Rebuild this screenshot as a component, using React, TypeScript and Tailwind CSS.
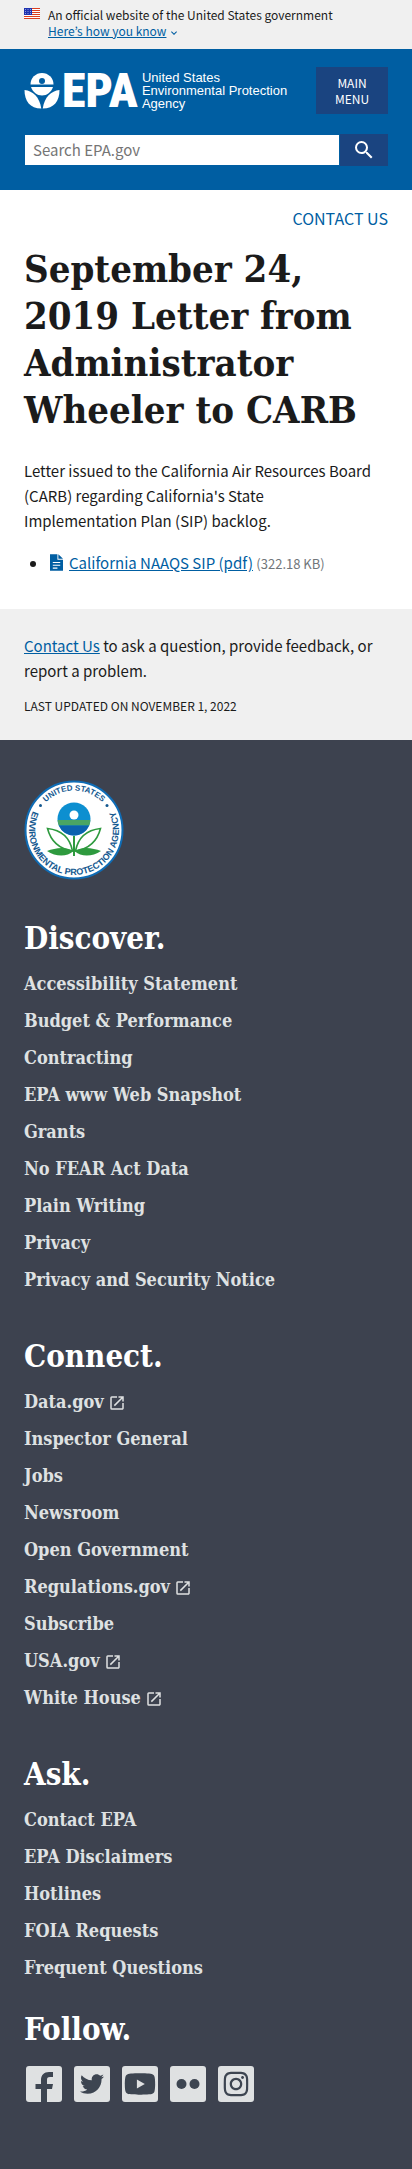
import React from "react";
import { MdOpenInNew, MdSearch, MdExpandMore } from "react-icons/md";
import { FaTwitter, FaYoutube, FaInstagram } from "react-icons/fa";

const serif = "font-['DejaVu_Serif_Condensed','DejaVu_Serif',serif]";

type FooterLink = { label: string; external?: boolean };

const sections: { title: string; links: FooterLink[] }[] = [
  {
    title: "Discover.",
    links: [
      { label: "Accessibility Statement" },
      { label: "Budget & Performance" },
      { label: "Contracting" },
      { label: "EPA www Web Snapshot" },
      { label: "Grants" },
      { label: "No FEAR Act Data" },
      { label: "Plain Writing" },
      { label: "Privacy" },
      { label: "Privacy and Security Notice" },
    ],
  },
  {
    title: "Connect.",
    links: [
      { label: "Data.gov", external: true },
      { label: "Inspector General" },
      { label: "Jobs" },
      { label: "Newsroom" },
      { label: "Open Government" },
      { label: "Regulations.gov", external: true },
      { label: "Subscribe" },
      { label: "USA.gov", external: true },
      { label: "White House", external: true },
    ],
  },
  {
    title: "Ask.",
    links: [
      { label: "Contact EPA" },
      { label: "EPA Disclaimers" },
      { label: "Hotlines" },
      { label: "FOIA Requests" },
      { label: "Frequent Questions" },
    ],
  },
];

function Flag() {
  return (
    <svg viewBox="0 0 16 11" className="mt-2 h-[11px] w-4 shrink-0" aria-hidden="true">
      <rect width="16" height="11" fill="#fff" />
      {[0, 2, 4, 6, 8, 10].map((y) => (
        <rect key={y} y={y} width="16" height="1" fill="#db3e1f" />
      ))}
      <rect width="8" height="7" fill="#1e33b1" />
      {[1.5, 3.5, 5.5].map((y) =>
        [1.5, 4, 6.5].map((x) => <circle key={`${x}-${y}`} cx={x} cy={y} r="0.45" fill="#fff" />),
      )}
    </svg>
  );
}

function Flower() {
  return (
    <svg viewBox="0 0 36 36" className="h-9 w-9 shrink-0" fill="#fff" aria-hidden="true">
      <path d="M6.500 11.500A11.500 11.500 0 0 1 29.500 11.500Z" />
      <circle cx="18" cy="8" r="3" fill="#005ea2" />
      <path d="M7 14H29C27 19.500 23 22.500 18 22.500C13 22.500 9 19.500 7 14Z" />
      <path d="M0.500 17C9 18 15.500 24 17.300 35.500C6 35.500 0.500 28 0.500 17Z" />
      <path d="M35.500 17C27 18 20.500 24 18.700 35.500C30 35.500 35.500 28 35.500 17Z" />
    </svg>
  );
}

function Seal() {
  return (
    <svg viewBox="0 0 100 100" className="h-[100px] w-[100px]" role="img" aria-label="EPA seal">
      <defs>
        <path id="seal-top" d="M10.500 50A39.500 39.500 0 0 1 89.500 50" />
        <path id="seal-bottom" d="M18.180 18.180A45 45 0 1 0 81.820 18.180" />
      </defs>
      <circle cx="50" cy="50" r="48.500" fill="#fff" stroke="#0f6cb5" strokeWidth="2" />
      <g fill="#14588f" className="font-['Liberation_Sans',sans-serif] font-bold">
        <text textAnchor="middle" className="text-[8px]">
          <textPath href="#seal-top" startOffset="50%">UNITED STATES</textPath>
        </text>
        <text textAnchor="middle" className="text-[9px]">
          <textPath href="#seal-bottom" startOffset="50%">ENVIRONMENTAL PROTECTION AGENCY</textPath>
        </text>
      </g>
      <circle cx="16.500" cy="25.500" r="1.500" fill="#14588f" />
      <circle cx="83" cy="25.500" r="1.500" fill="#14588f" />
      <circle cx="50" cy="39" r="16.500" fill="#0d8fd0" />
      <path d="M33.600 40H66.400A16.500 16.500 0 0 1 65.200 45.500H34.800A16.500 16.500 0 0 1 33.600 40Z" fill="#4aa564" />
      <path d="M34.800 45.500H65.200A16.500 16.500 0 0 1 34.800 45.500Z" fill="#0b62ae" />
      <circle cx="50" cy="35" r="4.500" fill="#fff" />
      <path d="M50 56V76" stroke="#2e9a3e" strokeWidth="2" />
      <path d="M48.500 71C36 69 27 62 23.500 48.500C37 50 46 58 48.500 71Z" fill="#fff" stroke="#2e9a3e" strokeWidth="1.600" />
      <path d="M51.500 71C64 69 73 62 76.500 48.500C63 50 54 58 51.500 71Z" fill="#fff" stroke="#2e9a3e" strokeWidth="1.600" />
      <path d="M49.500 71C41 66 31 68 23 71C32 77 43 77 49.500 71Z" fill="#2e9a3e" />
      <path d="M50.500 71C59 66 69 68 77 71C68 77 57 77 50.500 71Z" fill="#2e9a3e" />
    </svg>
  );
}

function SocialLink({ label, children }: { label: string; children: React.ReactNode }) {
  return (
    <a
      href="#"
      aria-label={label}
      className="flex h-9 w-9 items-center justify-center overflow-hidden rounded-[3px] bg-[#dfe1e2] text-[#3d4551]"
    >
      {children}
    </a>
  );
}

export default function App() {
  return (
    <div className="min-h-screen bg-[#3d424f] font-['Noto_Sans_CJK_KR','Noto_Sans',sans-serif] text-[#1b1b1b]">
      <section className="flex h-[49px] gap-2 bg-[#f0f0f0] px-6" aria-label="Official website">
        <Flag />
        <div className="pt-[7px] text-[12px] leading-4">
          <p>An official website of the United States government</p>
          <button className="flex items-center text-[#005ea2]">
            <span className="underline">Here’s how you know</span>
            <MdExpandMore className="mt-1 ml-0.5 h-3 w-3" />
          </button>
        </div>
      </section>

      <header className="bg-[#005ea2] px-6 pt-[18px] pb-6 text-white">
        <div className="flex items-center justify-between">
          <a href="#" className="flex items-center font-['Liberation_Sans',sans-serif]">
            <Flower />
            <span className="ml-0.5 font-['Roboto_Condensed','Roboto',sans-serif] text-[48px] leading-9 font-black">
              EPA
            </span>
            <span className="ml-1 text-[13px] leading-[13px]">
              United States
              <br />
              Environmental Protection
              <br />
              Agency
            </span>
          </a>
          <button className="h-[47px] w-[72px] shrink-0 bg-[#1a4480] px-3 text-[12px] leading-4">MAIN MENU</button>
        </div>
        <form className="mt-5 flex h-8" onSubmit={(e) => e.preventDefault()}>
          <input
            type="search"
            aria-label="Search"
            placeholder="Search EPA.gov"
            className="min-w-0 flex-1 border border-[#005ea2] bg-white px-2 text-[15px] text-[#1b1b1b] placeholder:text-[#757575]"
          />
          <button aria-label="Submit search" className="flex w-12 items-center justify-center bg-[#1a4480]">
            <MdSearch className="h-6 w-6" />
          </button>
        </form>
      </header>

      <main className="bg-white px-6 pt-4 pb-[33px]">
        <div className="text-right text-[16px] leading-6">
          <a href="#" className="text-[#005ea2]">CONTACT US</a>
        </div>
        <h1 className={`${serif} mt-[15px] text-[38px] leading-[47px] font-bold`}>
          September 24, 2019 Letter from Administrator Wheeler to CARB
        </h1>
        <p className="mt-[25px] pr-3 text-[15px] leading-[25px]">
          Letter issued to the California Air Resources Board (CARB) regarding California's State Implementation Plan
          (SIP) backlog.
        </p>
        <ul className="mt-[17px] list-disc pl-6 text-[15px] leading-[25px]">
          <li>
            <a href="#" className="text-[#005ea2] underline">
              <svg viewBox="0 0 14 18" className="mr-1.5 ml-0.5 inline h-[17px] w-[13px] align-[-2px]" aria-hidden="true">
                <path d="M0 0H8V6H14V18H0Z M9 0L14 5H9Z" fill="#005ea2" />
                <path d="M3 9H11M3 12H11M3 15H8" stroke="#fff" strokeWidth="1.200" />
              </svg>
              California NAAQS SIP (pdf)
            </a>{" "}
            <span className="text-[13px] text-[#71767a]">(322.18 KB)</span>
          </li>
        </ul>
      </main>

      <section className="bg-[#f0f0f0] px-6 pt-6 pb-6">
        <p className="text-[15px] leading-[25px]">
          <a href="#" className="text-[#005ea2] underline">Contact Us</a> to ask a question, provide feedback, or report a
          problem.
        </p>
        <p className="mt-[13px] text-[12px] leading-5">LAST UPDATED ON NOVEMBER 1, 2022</p>
      </section>

      <footer className="px-6 pt-10 pb-16">
        <Seal />
        {sections.map((section) => (
          <nav key={section.title} aria-label={section.title} className="mt-10">
            <h2 className={`${serif} text-[31px] leading-9 font-bold text-white`}>{section.title}</h2>
            <ul className={`${serif} mt-[9px] text-[18px] leading-[37px] font-bold text-[#dfe1e2]`}>
              {section.links.map((link) => (
                <li key={link.label}>
                  <a href="#" className="flex items-center">
                    {link.label}
                    {link.external && <MdOpenInNew className="mt-0.5 ml-1 h-[18px] w-[18px]" />}
                  </a>
                </li>
              ))}
            </ul>
          </nav>
        ))}
        <h2 className={`${serif} mt-[25px] text-[31px] leading-9 font-bold text-white`}>Follow.</h2>
        <div className="mt-[19px] flex gap-3 pl-0.5">
          <SocialLink label="Facebook">
            <svg viewBox="0 0 36 36" className="h-9 w-9" fill="currentColor">
              <path d="M15 36V23H9.500V18H15V14C15 9 18 6 23 6H27V11H24C21.500 11 21 12.200 21 14V18H27L26 23H21V36Z" />
            </svg>
          </SocialLink>
          <SocialLink label="Twitter">
            <FaTwitter className="h-6 w-6" />
          </SocialLink>
          <SocialLink label="YouTube">
            <FaYoutube className="h-8 w-8" />
          </SocialLink>
          <SocialLink label="Flickr">
            <svg viewBox="0 0 36 36" className="h-9 w-9" fill="currentColor">
              <circle cx="11.500" cy="18" r="5" />
              <circle cx="24.500" cy="18" r="5" />
            </svg>
          </SocialLink>
          <SocialLink label="Instagram">
            <FaInstagram className="h-7 w-7" />
          </SocialLink>
        </div>
      </footer>
    </div>
  );
}
